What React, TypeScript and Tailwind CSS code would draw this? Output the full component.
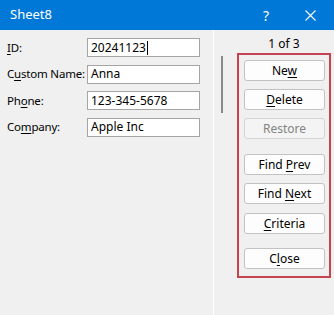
import React from "react";

const font = { fontFamily: '"Noto Sans", "Open Sans", sans-serif' };

function Label({ pre, u, post }: { pre: string; u: string; post: string }) {
  return (
    <span className="w-[80px] shrink-0 whitespace-nowrap text-[11.5px] tracking-[-0.2px] text-[#000]">
      {pre}
      <span className="underline underline-offset-2">{u}</span>
      {post}
    </span>
  );
}

function Btn({ pre, u, post, disabled }: { pre: string; u?: string; post?: string; disabled?: boolean }) {
  return (
    <div
      className={`flex h-[21px] w-[81px] items-center justify-center rounded-[3px] border text-[12px] ${
        disabled ? "border-[#d4d4d4] bg-[#f4f4f4] text-[#838383]" : "border-[#c2c2c2] bg-[#fdfdfd] text-[#000]"
      }`}
    >
      <span>
        {pre}
        {u && <span className="underline underline-offset-2">{u}</span>}
        {post}
      </span>
    </div>
  );
}

const fields = [
  { pre: "", u: "I", post: "D:", value: "20241123", caret: true },
  { pre: "C", u: "u", post: "stom Name:", value: "Anna" },
  { pre: "Ph", u: "o", post: "ne:", value: "123-345-5678" },
  { pre: "Co", u: "m", post: "pany:", value: "Apple Inc" },
];

export default function App() {
  return (
    <div className="flex h-[315px] w-[334px] flex-col overflow-hidden bg-[#f0f0f0]" style={font}>
      {/* title bar */}
      <div className="flex h-[30px] shrink-0 items-center bg-[#0078d7] pl-[10px] text-white">
        <span className="text-[13px]">Sheet8</span>
        <span className="ml-auto mr-[36px] text-[14px]">?</span>
        <svg width="11" height="11" viewBox="0 0 11 11" className="mr-[18px]">
          <path d="M0.5 0.5 L10.5 10.5 M10.5 0.5 L0.5 10.5" stroke="white" strokeWidth="1.1" fill="none" />
        </svg>
      </div>

      <div className="flex flex-1">
        {/* fields */}
        <div className="flex w-[213px] flex-col gap-[7.5px] pl-[7px] pt-[8px]">
          {fields.map((f) => (
            <div key={f.value} className="flex h-[19px] items-center">
              <Label pre={f.pre} u={f.u} post={f.post} />
              <div className="flex h-[19px] w-[113px] items-center border border-[#a5a5a5] bg-white pl-[3px] text-[12px] text-[#000]">
                {f.value}
                {f.caret && <span className="ml-[1px] h-[14px] w-[1px] bg-black" />}
              </div>
            </div>
          ))}
        </div>

        <div className="w-[1px] bg-white" />

        {/* buttons */}
        <div className="flex flex-1">
          <div className="ml-[7px] mt-[26px] h-[57px] w-[2px] bg-[#8a8a8a]" />
          <div className="ml-[14px] flex flex-col">
            <div className="flex h-[23px] items-end justify-center text-[12px] text-[#000]">1 of 3</div>
            <div className="flex h-[225px] w-[94px] flex-col border-2 border-[#c4444f] pl-[5px] pt-[5px]">
              <Btn pre="Ne" u="w" />
              <div className="mt-[8px]">
                <Btn pre="" u="D" post="elete" />
              </div>
              <div className="mt-[8px]">
                <Btn pre="Restore" disabled />
              </div>
              <div className="mt-[15px]">
                <Btn pre="Find " u="P" post="rev" />
              </div>
              <div className="mt-[8px]">
                <Btn pre="Find " u="N" post="ext" />
              </div>
              <div className="mt-[9px]">
                <Btn pre="" u="C" post="riteria" />
              </div>
              <div className="mt-[14px]">
                <Btn pre="C" u="l" post="ose" />
              </div>
            </div>
          </div>
        </div>
      </div>
    </div>
  );
}
